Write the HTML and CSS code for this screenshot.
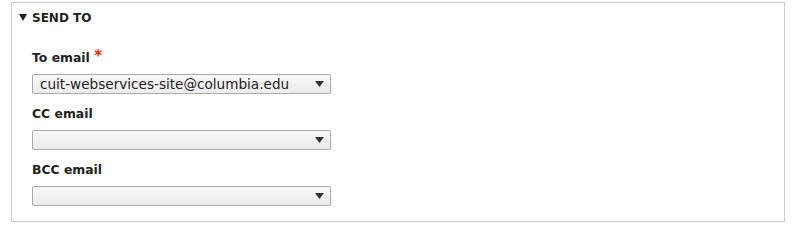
FILE: index.html
```html
<!DOCTYPE html>
<html lang="en">
<head>
<meta charset="utf-8">
<title>Send to</title>
<link rel="stylesheet" href="styles.css">
</head>
<body>
<div class="panel">
  <div class="head">
    <svg class="caret" width="8" height="7" viewBox="0 0 8 7"><path d="M0 0H8L4 7Z" fill="#222"/></svg>
    <span>Send to</span>
  </div>
  <div class="body">
    <div class="item">
      <label class="label" for="to">To email <span class="req">*</span></label>
      <div class="sel">
        <select id="to"><option>cuit-webservices-site@columbia.edu</option></select>
        <svg class="arrow" width="9" height="6" viewBox="0 0 9 6"><path d="M0 0H9L4.5 6Z" fill="#333"/></svg>
      </div>
    </div>
    <div class="item">
      <label class="label" for="cc">CC email</label>
      <div class="sel">
        <select id="cc"><option></option></select>
        <svg class="arrow" width="9" height="6" viewBox="0 0 9 6"><path d="M0 0H9L4.5 6Z" fill="#333"/></svg>
      </div>
    </div>
    <div class="item">
      <label class="label" for="bcc">BCC email</label>
      <div class="sel">
        <select id="bcc"><option></option></select>
        <svg class="arrow" width="9" height="6" viewBox="0 0 9 6"><path d="M0 0H9L4.5 6Z" fill="#333"/></svg>
      </div>
    </div>
  </div>
</div>
</body>
</html>
```

FILE: styles.css
```css
html, body {
  margin: 0;
  padding: 0;
  background: #fff;
}
body {
  font-family: "DejaVu Sans", "Liberation Sans", sans-serif;
  color: #333;
}
.panel {
  margin: 2px 10px 0 11px;
  border: 1px solid #ccc;
  padding: 7px 0 15px 0;
}
.head {
  display: flex;
  align-items: center;
  gap: 5px;
  padding-left: 7px;
  height: 16px;
  font-size: 12px;
  font-weight: bold;
  text-transform: uppercase;
  color: #222;
}
.caret {
  display: block;
  margin-top: -1px;
}
.body {
  padding: 22px 0 0 20px;
  display: flex;
  flex-direction: column;
  gap: 11px;
}
.item {
  display: flex;
  flex-direction: column;
  gap: 7px;
}
.label {
  font-size: 12.4px;
  line-height: 18px;
  font-weight: bold;
  color: #222;
}
.req {
  color: #e32700;
  font-weight: bold;
  font-size: 15px;
  position: relative;
  top: -1px;
}
.sel {
  position: relative;
  width: 299px;
  height: 20px;
}
.sel select {
  appearance: none;
  -webkit-appearance: none;
  width: 299px;
  height: 20px;
  margin: 0;
  box-sizing: border-box;
  border: 1px solid #aaa;
  border-radius: 2px;
  background: linear-gradient(#fafafa, #ebebeb);
  font-family: "DejaVu Sans", "Liberation Sans", sans-serif;
  font-size: 13.6px;
  color: #222;
  padding: 0 20px 0 7px;
  line-height: 18px;
}
.arrow {
  position: absolute;
  right: 7px;
  top: 7px;
  display: block;
  pointer-events: none;
}
```
